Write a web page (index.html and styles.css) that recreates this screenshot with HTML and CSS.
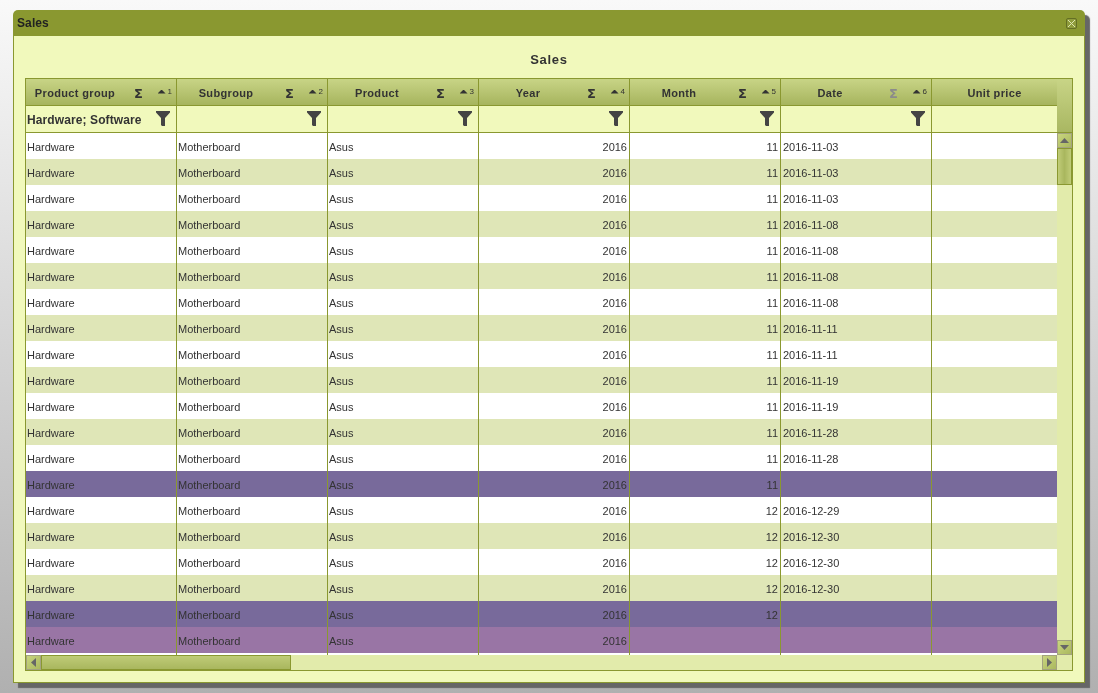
FILE: index.html
```html
<!DOCTYPE html>
<html lang="en">
<head>
    <meta charset="UTF-8">
    <title>Sales</title>
    <link rel="stylesheet" href="styles.css">
</head>
<body>

<svg class="defs" width="0" height="0">
    <symbol id="funnel" viewBox="0 0 14 15">
        <path d="M0 0H14V1.500L9 7V15H6L5 14V7L0 1.500Z"/>
    </symbol>
</svg>

<div class="window">
    <div class="titlebar">
        <span class="title">Sales</span>
        <span class="close">
            <svg width="9" height="9" viewBox="0 0 9 9"><path d="M1 1L8 8M8 1L1 8"/></svg>
        </span>
    </div>
    <div class="body">
        <div class="caption">Sales</div>
        <div class="grid">
            <div class="head">
                <div class="head-cols">
                    <div class="row head-row">
                        <div class="hcell"><span class="hlabel">Product group</span><span class="sigma">Σ</span><span class="sort"><i></i>1</span></div>
                        <div class="hcell"><span class="hlabel">Subgroup</span><span class="sigma">Σ</span><span class="sort"><i></i>2</span></div>
                        <div class="hcell"><span class="hlabel">Product</span><span class="sigma">Σ</span><span class="sort"><i></i>3</span></div>
                        <div class="hcell"><span class="hlabel">Year</span><span class="sigma">Σ</span><span class="sort"><i></i>4</span></div>
                        <div class="hcell"><span class="hlabel">Month</span><span class="sigma">Σ</span><span class="sort"><i></i>5</span></div>
                        <div class="hcell"><span class="hlabel">Date</span><span class="sigma off">Σ</span><span class="sort"><i></i>6</span></div>
                        <div class="hcell last"><span class="hlabel">Unit price</span></div>
                    </div>
                    <div class="row filter-row">
                        <div class="fcell"><span class="ftext">Hardware; Software</span><svg class="funnel"><use href="#funnel"/></svg></div>
                        <div class="fcell"><span class="ftext"></span><svg class="funnel"><use href="#funnel"/></svg></div>
                        <div class="fcell"><span class="ftext"></span><svg class="funnel"><use href="#funnel"/></svg></div>
                        <div class="fcell"><span class="ftext"></span><svg class="funnel"><use href="#funnel"/></svg></div>
                        <div class="fcell"><span class="ftext"></span><svg class="funnel"><use href="#funnel"/></svg></div>
                        <div class="fcell"><span class="ftext"></span><svg class="funnel"><use href="#funnel"/></svg></div>
                        <div class="fcell last"></div>
                    </div>
                </div>
                <div class="head-corner"></div>
            </div>
            <div class="middle">
                <div class="rows">
                    <div class="row"><span>Hardware</span><span>Motherboard</span><span>Asus</span><span class="num">2016</span><span class="num">11</span><span class="date">2016-11-03</span><span class="last"></span></div>
                    <div class="row alt"><span>Hardware</span><span>Motherboard</span><span>Asus</span><span class="num">2016</span><span class="num">11</span><span class="date">2016-11-03</span><span class="last"></span></div>
                    <div class="row"><span>Hardware</span><span>Motherboard</span><span>Asus</span><span class="num">2016</span><span class="num">11</span><span class="date">2016-11-03</span><span class="last"></span></div>
                    <div class="row alt"><span>Hardware</span><span>Motherboard</span><span>Asus</span><span class="num">2016</span><span class="num">11</span><span class="date">2016-11-08</span><span class="last"></span></div>
                    <div class="row"><span>Hardware</span><span>Motherboard</span><span>Asus</span><span class="num">2016</span><span class="num">11</span><span class="date">2016-11-08</span><span class="last"></span></div>
                    <div class="row alt"><span>Hardware</span><span>Motherboard</span><span>Asus</span><span class="num">2016</span><span class="num">11</span><span class="date">2016-11-08</span><span class="last"></span></div>
                    <div class="row"><span>Hardware</span><span>Motherboard</span><span>Asus</span><span class="num">2016</span><span class="num">11</span><span class="date">2016-11-08</span><span class="last"></span></div>
                    <div class="row alt"><span>Hardware</span><span>Motherboard</span><span>Asus</span><span class="num">2016</span><span class="num">11</span><span class="date">2016-11-11</span><span class="last"></span></div>
                    <div class="row"><span>Hardware</span><span>Motherboard</span><span>Asus</span><span class="num">2016</span><span class="num">11</span><span class="date">2016-11-11</span><span class="last"></span></div>
                    <div class="row alt"><span>Hardware</span><span>Motherboard</span><span>Asus</span><span class="num">2016</span><span class="num">11</span><span class="date">2016-11-19</span><span class="last"></span></div>
                    <div class="row"><span>Hardware</span><span>Motherboard</span><span>Asus</span><span class="num">2016</span><span class="num">11</span><span class="date">2016-11-19</span><span class="last"></span></div>
                    <div class="row alt"><span>Hardware</span><span>Motherboard</span><span>Asus</span><span class="num">2016</span><span class="num">11</span><span class="date">2016-11-28</span><span class="last"></span></div>
                    <div class="row"><span>Hardware</span><span>Motherboard</span><span>Asus</span><span class="num">2016</span><span class="num">11</span><span class="date">2016-11-28</span><span class="last"></span></div>
                    <div class="row total-month"><span>Hardware</span><span>Motherboard</span><span>Asus</span><span class="num">2016</span><span class="num">11</span><span></span><span class="last"></span></div>
                    <div class="row"><span>Hardware</span><span>Motherboard</span><span>Asus</span><span class="num">2016</span><span class="num">12</span><span class="date">2016-12-29</span><span class="last"></span></div>
                    <div class="row alt"><span>Hardware</span><span>Motherboard</span><span>Asus</span><span class="num">2016</span><span class="num">12</span><span class="date">2016-12-30</span><span class="last"></span></div>
                    <div class="row"><span>Hardware</span><span>Motherboard</span><span>Asus</span><span class="num">2016</span><span class="num">12</span><span class="date">2016-12-30</span><span class="last"></span></div>
                    <div class="row alt"><span>Hardware</span><span>Motherboard</span><span>Asus</span><span class="num">2016</span><span class="num">12</span><span class="date">2016-12-30</span><span class="last"></span></div>
                    <div class="row total-month"><span>Hardware</span><span>Motherboard</span><span>Asus</span><span class="num">2016</span><span class="num">12</span><span></span><span class="last"></span></div>
                    <div class="row total-year"><span>Hardware</span><span>Motherboard</span><span>Asus</span><span class="num">2016</span><span class="num"></span><span></span><span class="last"></span></div>
                    <div class="row row-end"><span></span><span></span><span></span><span></span><span></span><span></span><span class="last"></span></div>
                </div>
                <div class="vscroll">
                    <div class="sbtn"><i class="arrow up"></i></div>
                    <div class="vthumb"></div>
                    <div class="track"></div>
                    <div class="sbtn"><i class="arrow down"></i></div>
                </div>
            </div>
            <div class="hscroll">
                <div class="sbtn"><i class="arrow left"></i></div>
                <div class="hthumb"></div>
                <div class="track"></div>
                <div class="sbtn"><i class="arrow right"></i></div>
                <div class="corner"></div>
            </div>
        </div>
    </div>
</div>

</body>
</html>
```

FILE: styles.css
```css
html, body {
    height: 100%;
}
body {
    margin: 0;
    padding: 10px 13px;
    box-sizing: border-box;
    overflow: hidden;
    font-family: "Liberation Sans", Arial, sans-serif;
    font-size: 11px;
    color: #333;
    background: linear-gradient(to bottom, #f9f9f9 0%, #b0b0b0 100%);
}
.defs {
    display: block;
}
.window {
    width: 1072px;
    height: 673px;
    display: flex;
    flex-direction: column;
    border-radius: 5px 5px 0 0;
    box-shadow: 5px 5px 1px #666;
    will-change: transform;
}
.titlebar {
    height: 26px;
    flex: none;
    display: flex;
    align-items: center;
    justify-content: space-between;
    padding: 0 8px 0 4px;
    background: #8a9830;
    border-radius: 5px 5px 0 0;
}
.title {
    font-size: 12px;
    font-weight: bold;
    color: #222;
    letter-spacing: 0.1px;
}
.close {
    width: 9px;
    height: 9px;
    display: flex;
    border: 1px solid #646f24;
    background: #8f9c3c;
    border-radius: 2px;
}
.close path {
    stroke: #dfe6b0;
    fill: none;
}
.body {
    flex: 1;
    padding: 0 11px 11px;
    display: flex;
    flex-direction: column;
    background: #f1f9bc;
    border: 1px solid #8a9830;
    border-top: none;
}
.caption {
    height: 42px;
    flex: none;
    line-height: 47px;
    text-align: center;
    font-size: 13px;
    font-weight: bold;
    letter-spacing: 0.7px;
}
.grid {
    height: 593px;
    box-sizing: border-box;
    display: flex;
    flex-direction: column;
    border: 1px solid #8a9830;
}
.head {
    display: flex;
    flex: none;
}
.head-cols {
    width: 1032px;
}
.head-corner {
    width: 15px;
    background: linear-gradient(to bottom, #c8d486 0%, #a9b762 100%);
    border-bottom: 1px solid #8a9830;
}
.row {
    display: flex;
    height: 26px;
    background: #fff;
}
.row > * {
    width: 151px;
    box-sizing: border-box;
    flex: none;
    border-right: 1px solid #8a9830;
}
.row > .last {
    width: 125px;
    border-right: none;
}
.head-row {
    height: 27px;
    background: linear-gradient(to bottom, #c8d486 0%, #a5b35c 100%);
}
.hcell {
    display: flex;
    align-items: center;
    padding-top: 2px;
    border-bottom: 1px solid #8a9830;
    font-weight: bold;
    letter-spacing: 0.35px;
}
.hlabel {
    width: 98px;
    text-align: center;
}
.last .hlabel {
    width: 100%;
}
.sigma {
    width: 29px;
    text-align: center;
    font-family: "DejaVu Sans", sans-serif;
    font-size: 13px;
    color: #333;
}
.sigma.off {
    color: #8b8b8b;
}
.sort {
    display: flex;
    align-items: center;
    justify-content: flex-end;
    gap: 2px;
    width: 22px;
    padding-right: 3px;
    box-sizing: border-box;
    font-size: 8px;
    font-weight: normal;
    letter-spacing: 0;
    margin-top: -3px;
}
.sort i {
    width: 8px;
    height: 4px;
    background: #333;
    clip-path: polygon(50% 0, 100% 100%, 0 100%);
}
.filter-row {
    height: 27px;
    background: #f1f9bc;
}
.fcell {
    display: flex;
    align-items: center;
    justify-content: space-between;
    padding: 0 6px 0 1px;
    border-bottom: 1px solid #8a9830;
}
.ftext {
    font-size: 12px;
    font-weight: bold;
    letter-spacing: 0.1px;
    padding-top: 2px;
}
.funnel {
    width: 14px;
    height: 15px;
    margin-top: -2px;
    fill: #444;
}
.middle {
    flex: 1;
    display: flex;
    min-height: 0;
}
.rows {
    width: 1032px;
}
.rows .row > span {
    padding: 0 1px;
    line-height: 28px;
    white-space: nowrap;
}
.rows .row > .num {
    text-align: right;
    padding-right: 2px;
}
.rows .row > .date {
    padding-left: 2px;
}
.row.alt {
    background: #dfe6b7;
}
.row.total-month {
    background: #786a9b;
}
.row.total-year {
    background: #9975a5;
}
.row.row-end {
    height: 2px;
}
.vscroll {
    width: 15px;
    display: flex;
    flex-direction: column;
    background: #e2ebab;
}
.vthumb {
    height: 37px;
    box-sizing: border-box;
    border: 1px solid #8a9830;
    background: linear-gradient(to right, #c0cc78 0%, #a9b75e 50%, #c0cc78 100%);
}
.track {
    flex: 1;
    background: #e2ebab;
}
.sbtn {
    width: 15px;
    height: 15px;
    flex: none;
    box-sizing: border-box;
    display: flex;
    align-items: center;
    justify-content: center;
    border: 1px solid #a3a37f;
    background: linear-gradient(135deg, #c9d57f 0%, #aab85f 100%);
}
.arrow {
    background: #666;
}
.arrow.up {
    width: 9px;
    height: 5px;
    clip-path: polygon(50% 0, 100% 100%, 0 100%);
}
.arrow.down {
    width: 9px;
    height: 5px;
    clip-path: polygon(0 0, 100% 0, 50% 100%);
}
.arrow.left {
    width: 5px;
    height: 9px;
    clip-path: polygon(100% 0, 100% 100%, 0 50%);
}
.arrow.right {
    width: 5px;
    height: 9px;
    clip-path: polygon(0 0, 100% 50%, 0 100%);
}
.hscroll {
    height: 15px;
    flex: none;
    display: flex;
    background: #e2ebab;
}
.hthumb {
    width: 250px;
    flex: none;
    box-sizing: border-box;
    border: 1px solid #8a9830;
    background: linear-gradient(to bottom, #bfcb77 0%, #a9b75e 100%);
}
.corner {
    width: 15px;
    flex: none;
}
```
